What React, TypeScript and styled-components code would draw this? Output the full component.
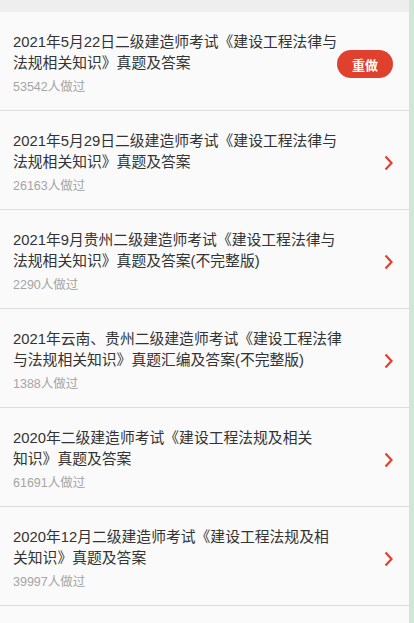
import styled, { createGlobalStyle } from 'styled-components';

const GlobalStyle = createGlobalStyle`
  html, body {
    margin: 0;
    padding: 0;
    background: #fafafa;
  }
  body {
    font-family: "Liberation Sans", "Noto Sans CJK SC", sans-serif;
  }
`;

const Page = styled.div`
  display: grid;
  grid-template-columns: minmax(0, 1fr) 5px;
  height: 623px;
  overflow: hidden;
`;

const Main = styled.div`
  display: flex;
  flex-direction: column;
  min-width: 0;
  background: #fafafa;
`;

const TopBand = styled.div`
  height: 12px;
  flex-shrink: 0;
  background: #eeeeee;
`;

const SideStrip = styled.div`
  background: #cfe8d4;
`;

const List = styled.ul`
  list-style: none;
  margin: 0;
  padding: 0;
`;

const Row = styled.li`
  display: flex;
  align-items: center;
  gap: 12px;
  height: 99px;
  box-sizing: border-box;
  padding: 6px 16px 0 13px;
  border-bottom: 1px solid #dddddd;
`;

const Info = styled.div`
  flex: 1;
  min-width: 0;
  display: flex;
  flex-direction: column;
  gap: 4px;
`;

const Title = styled.div`
  font-size: 14.8px;
  line-height: 21px;
  color: #333333;
`;

const TitleLine = styled.span`
  display: block;
  white-space: nowrap;
`;

const Count = styled.div`
  font-size: 12.5px;
  line-height: 18px;
  color: #a5a5a5;
`;

const RedoButton = styled.button`
  flex-shrink: 0;
  width: 56px;
  height: 28px;
  border: none;
  border-radius: 14px;
  background: #e0402e;
  color: #ffffff;
  font-family: inherit;
  font-size: 13px;
  font-weight: 700;
  cursor: pointer;
`;

const Chevron = styled.svg`
  flex-shrink: 0;
  width: 9px;
  height: 16px;
`;

interface Paper {
  lines: string[];
  count: number;
  done?: boolean;
}

const papers: Paper[] = [
  { lines: ['2021年5月22日二级建造师考试《建设工程法律与', '法规相关知识》真题及答案'], count: 53542, done: true },
  { lines: ['2021年5月29日二级建造师考试《建设工程法律与', '法规相关知识》真题及答案'], count: 26163 },
  { lines: ['2021年9月贵州二级建造师考试《建设工程法律与', '法规相关知识》真题及答案(不完整版)'], count: 2290 },
  { lines: ['2021年云南、贵州二级建造师考试《建设工程法律', '与法规相关知识》真题汇编及答案(不完整版)'], count: 1388 },
  { lines: ['2020年二级建造师考试《建设工程法规及相关', '知识》真题及答案'], count: 61691 },
  { lines: ['2020年12月二级建造师考试《建设工程法规及相', '关知识》真题及答案'], count: 39997 },
];

const App = () => (
  <>
    <GlobalStyle />
    <Page>
      <Main>
        <TopBand />
        <List>
          {papers.map(p => (
            <Row key={p.lines.join('')}>
              <Info>
                <Title>
                  {p.lines.map(line => (
                    <TitleLine key={line}>{line}</TitleLine>
                  ))}
                </Title>
                <Count>{p.count}人做过</Count>
              </Info>
              {p.done ? (
                <RedoButton>重做</RedoButton>
              ) : (
                <Chevron viewBox="0 0 9 16">
                  <polyline points="1.5,1.5 7.5,8 1.5,14.5" fill="none" stroke="#e0402e" strokeWidth="2.2" />
                </Chevron>
              )}
            </Row>
          ))}
        </List>
      </Main>
      <SideStrip />
    </Page>
  </>
);

export default App;
